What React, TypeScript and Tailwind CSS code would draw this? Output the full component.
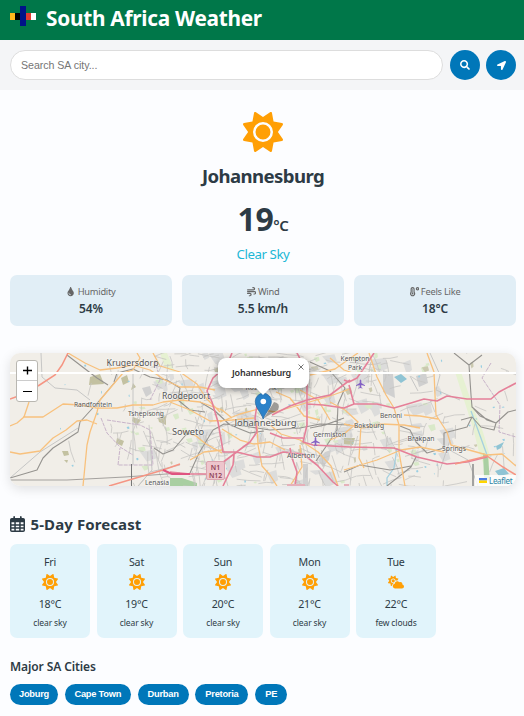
import React from "react";
import { FaSun, FaCloudSun, FaWind } from "react-icons/fa6";
import { FaSearch, FaLocationArrow, FaTint, FaTemperatureHigh } from "react-icons/fa";

const stats = [
  { icon: FaTint, label: "Humidity", value: "54%" },
  { icon: FaWind, label: "Wind", value: "5.5 km/h" },
  { icon: FaTemperatureHigh, label: "Feels Like", value: "18°C" },
];

const days = [
  { day: "Fri", temp: "18°C", text: "clear sky", icon: FaSun },
  { day: "Sat", temp: "19°C", text: "clear sky", icon: FaSun },
  { day: "Sun", temp: "20°C", text: "clear sky", icon: FaSun },
  { day: "Mon", temp: "21°C", text: "clear sky", icon: FaSun },
  { day: "Tue", temp: "22°C", text: "few clouds", icon: FaCloudSun },
];

const cities = [
  { name: "Joburg", width: "w-12" },
  { name: "Cape Town", width: "w-[66px]" },
  { name: "Durban", width: "w-[51px]" },
  { name: "Pretoria", width: "w-[53px]" },
  { name: "PE", width: "w-8" },
];

function seeded(seed: number) {
  let s = seed;
  return () => {
    s = (s * 16807) % 2147483647;
    return s / 2147483647;
  };
}

// Side streets: short bent segments, denser around the city centre.
function buildStreets() {
  const r = seeded(77);
  const out: string[] = [];
  while (out.length < 400) {
    const x = 10 + r() * 506;
    const y = 353 + r() * 133;
    const keep = x < 110 ? 0.06 : x < 150 ? 0.4 : x < 400 ? 1 : x < 445 ? 0.5 : 0.12;
    if (r() > keep) continue;
    const a = (r() < 0.5 ? 0 : Math.PI / 2) + (r() - 0.5) * 0.9;
    const l = 7 + r() * 17;
    const dx = Math.cos(a) * l;
    const dy = Math.sin(a) * l;
    out.push(`M${x.toFixed(1)} ${y.toFixed(1)}q${(dx / 2 + r() * 4 - 2).toFixed(1)} ${(dy / 2 + r() * 4 - 2).toFixed(1)} ${dx.toFixed(1)} ${dy.toFixed(1)}`);
  }
  return out.join("");
}

function buildPatches(seed: number, count: number, x0: number, x1: number, size: number) {
  const r = seeded(seed);
  let out = "";
  for (let i = 0; i < count; i++) {
    const x = x0 + r() * (x1 - x0);
    const y = 353 + r() * 130;
    const w = size * (0.4 + r());
    const h = size * (0.3 + r() * 0.8);
    out += `M${x.toFixed(1)} ${y.toFixed(1)}l${w.toFixed(1)} ${(-h * 0.3).toFixed(1)} ${(w * 0.2).toFixed(1)} ${h.toFixed(1)} ${(-w * 0.7).toFixed(1)} ${(h * 0.4).toFixed(1)}z`;
  }
  return out;
}

const streets = buildStreets();
const urban = buildPatches(21, 75, 140, 440, 11);
const parks = buildPatches(35, 70, 130, 430, 5);
const olive = buildPatches(90, 14, 170, 490, 5);
const ponds = buildPatches(12, 42, 60, 505, 2);

const orangeRoads =
  "M10 426L17 423L24 417L29 402M23 417H43L63 404L80 405L97 408H117L133 405H153L163 402L180 400L200 402L222 410L232 418" +
  "M10 452L20 454L40 451L53 438L66 430L77 421L87 420L97 424" +
  "M83 486L87 445L90 432L97 412L100 400L117 380L123 373L133 370L140 358L137 353" +
  "M68 353L85 363L100 370L117 368L133 365L150 370L165 380L180 387L200 387L215 390" +
  "M153 353L160 366L180 372L197 384L206 398L220 412M170 402L190 410L210 421L232 420L254 418" +
  "M220 422L240 414L258 409L275 412L306 403L330 396L350 389" +
  "M257 422L258 445L262 466L270 475L277 486M270 425L281 434L300 440L318 452L331 466L338 486" +
  "M310 375L335 369L352 357L358 353M330 402L345 410L358 422L344 434L330 440" +
  "M222 429L240 440L254 444L270 442L285 450M180 430L196 436L206 444L222 453M190 460L204 452L222 450" +
  "M369 353L377 377L386 395L394 408L399 425L399 452L405 486" +
  "M427 353L434 372L435 395L436 415L447 432L451 445L487 455L502 454L516 466" +
  "M404 415L420 416L438 419M361 425L359 458L364 468M344 470L377 460L401 450L420 447L444 452" +
  "M300 390L318 400L330 420M290 486L302 467L300 445M344 424L362 428L382 424L404 425L420 428" +
  "M330 358L344 370L356 374M276 392L290 398L304 416L320 420";

const pinkRoads =
  "M232 353L227 365L213 378L207 391L212 402L218 422L222 445L223 452L237 452L257 457L270 457L283 452L303 454L317 465L333 482L338 486" +
  "M170 472L190 474L207 474L222 463L234 454L250 442L257 432L255 418L257 405" +
  "M234 454L233 465L223 486M297 353L307 372V425L303 442L313 445L350 447L394 448L417 457L447 464L467 462L487 457" +
  "M350 380L330 395L307 400L290 406L272 415M270 433L283 438L303 438" +
  "M290 448L292 458L297 472L295 486M307 404L323 405L344 408L354 404H377L394 408L411 403L424 399L437 401L447 396L467 399H491L499 392L516 383" +
  "M374 353L364 368L357 378L349 382L344 380M349 385L354 404";

const rails =
  "M67 355L80 365L97 378L108 385M114 382L117 373L133 369L150 377L167 380L180 388L178 400L190 410L205 412" +
  "M115 382L100 400L80 422L78 432L53 448L43 458L37 470L10 478M190 473L199 453L213 430L224 424L244 426L270 430L300 428L320 424L350 425" +
  "M200 402L215 411L230 425L250 433L264 431M310 362L330 371L345 388L338 404L337 430L325 448L316 461" +
  "M344 418L325 425L310 428M454 353L469 365L471 395L472 407L487 420L496 423L494 430L481 427L472 417L461 420" +
  "M469 365L482 355M472 417L467 427L444 433V448L427 453L416 442L410 430L400 426M387 486L411 467L416 457" +
  "M472 407L480 416L496 423L508 412L516 410M154 448L163 454L173 450L190 430M344 472L360 465L390 470L411 466";

const labels: { x: number; y: number; s: number; t: string; w: number }[] = [
  { x: 132.5, y: 366, s: 9, t: "Krugersdorp", w: 52 },
  { x: 93, y: 407, s: 6.8, t: "Randfontein", w: 38 },
  { x: 146, y: 416, s: 6.8, t: "Tshepisong", w: 36 },
  { x: 186, y: 398.5, s: 9, t: "Roodepoort", w: 48 },
  { x: 188, y: 435, s: 9, t: "Soweto", w: 32 },
  { x: 157, y: 485, s: 6.8, t: "Lenasia", w: 24 },
  { x: 261, y: 390, s: 6.8, t: "Rosebank", w: 31 },
  { x: 265.5, y: 426, s: 9.5, t: "Johannesburg", w: 62 },
  { x: 329.5, y: 437, s: 6.8, t: "Germiston", w: 33 },
  { x: 301, y: 457.5, s: 6.8, t: "Alberton", w: 28 },
  { x: 355, y: 361, s: 6.8, t: "Kempton", w: 29 },
  { x: 355, y: 369.5, s: 6.8, t: "Park", w: 14 },
  { x: 391, y: 417.5, s: 6.8, t: "Benoni", w: 22 },
  { x: 369, y: 428, s: 6.8, t: "Boksburg", w: 30 },
  { x: 421, y: 440.5, s: 6.8, t: "Brakpan", w: 27 },
  { x: 454, y: 451, s: 6.8, t: "Springs", w: 24 },
];

function Plane({ x, y }: { x: number; y: number }) {
  return (
    <path
      transform={`translate(${x} ${y})`}
      d="M0-4.5Q.8-4.5.8-3V-1L4.5 1.2V2L.8 1V3.2L2 4V4.6L0 4.1L-2 4.6V4L-.8 3.2V1L-4.5 2V1.2L-.8-1V-3Q-.8-4.5 0-4.5Z"
      fill="#8461c4"
    />
  );
}

function CalendarIcon() {
  return (
    <svg className="h-4 w-[15px] shrink-0" viewBox="0 0 15 16" fill="currentColor">
      <path
        fillRule="evenodd"
        d="M4.200 0Q5 0 5 .9V2H10V.9Q10 0 10.800 0T11.700 .9V2H13.200Q15 2 15 3.800V14.200Q15 16 13.200 16H1.800Q0 16 0 14.200V3.800Q0 2 1.800 2H3.300V.9Q3.300 0 4.200 0ZM1.500 6.200V8.300H4.300V6.200ZM5.800 6.200V8.300H9.200V6.200ZM10.700 6.200V8.300H13.500V6.200ZM1.500 9.700V11.300H4.300V9.700ZM5.800 9.700V11.300H9.200V9.700ZM10.700 9.700V11.300H13.500V9.700ZM1.500 12.700V14.400H4.300V12.700ZM5.800 12.700V14.400H9.200V12.700ZM10.700 12.700V14.400H13.500V12.700Z"
      />
    </svg>
  );
}

function MapCanvas() {
  return (
    <svg viewBox="10 353 506 133" className="block h-[133px] w-[506px]" fill="none">
      <rect x="10" y="353" width="506" height="133" fill="#f1eee8" />
      <path d={urban} fill="#dcdcdb" />
      <path d={parks} fill="#d9e9c9" />
      <path d={olive} fill="#cbc9b0" />
      <path
        d="M90 377l10-3 4 10-15 1zM121 378l6-3 2 7-6 3zM133 383l3 4-5 3zM62 451h6l1 4-5 1zM64 460l4 0-1 3zM117 438l7 3-2 5-6-3zM133 417l8 3-4 5-5-4zM158 418l8-2v9l-7-3zM344 438h11l-2 7-9-1z"
        fill="#c3c1a1"
      />
      <path d="M160 353l5 15 10 4-8-19M455 372l6 0 14 40 8 20 7 24-3 18-8-22-6-24z" fill="#e6f1d2" />
      <path d="M483 453l5 2 2 28-6-6zM170 478l12 0 15 5v3h-27z" fill="#a9cfa2" />
      <path d="M142 388l8-2 2 7-6 4zM416 376l10-3 2 10-9 4zM383 370l10 4 2 24-12-6zM318 460l7-8 6-2-2 10-6 7zM303 464h5v22h-5z" fill="#d0d0d0" />
      <path d={ponds} fill="#9acfe2" />
      <path d="M394 377l7-3 6 5-6 4zM495 471l9-3 5 6-10 2zM497 450l-1-4 8-4-3 6z" fill="#8fc4d4" />
      <path d={streets} stroke="#c6c5c3" strokeWidth=".8" />
      <path
        d="M41 353L42 377L55 388L77 390L90 400M133 373V465M10 478L40 452L78 428M180 465L150 472L135 490M430 353L440 375L436 390L460 400M440 470L450 440M150 440L152 470L138 486M410 376L418 391M478 486L468 460L442 446"
        stroke="#c6c6c5"
        strokeWidth="1"
      />
      <path
        d="M101 418L107 433L120 447L133 455M118 465L120 448M107 420L140 425L150 430L153 465L118 465M491 363L482 378L500 405L499 432L516 437M155 360L160 380L150 400"
        stroke="#c3adc5"
        strokeWidth=".9"
        strokeDasharray="4 1"
      />
      <path d="M397 448L394 468L387 478V486M471 411L478 430L487 455" stroke="#a5d0df" strokeWidth="1.3" />
      <path d={rails} stroke="#95938f" strokeWidth="1.1" strokeLinejoin="round" />
      <path d="M10 480L67 480L125 477L180 473" stroke="#a4a19e" strokeWidth="1" />
      <path d="M131.500 464V486" stroke="#777" strokeWidth="1" />
      <path d="M473 464V486" stroke="#999" strokeWidth="1.8" />
      <path d={orangeRoads} stroke="#f8c17d" strokeWidth="1.3" strokeLinejoin="round" />
      <path d={pinkRoads} stroke="#e58099" strokeWidth="1.6" strokeLinejoin="round" />
      <path
        d="M10 399L24 394M38 386L55 375L62 365L68 353M109 486L163 470L180 464M455 464L487 456L503 467L516 475"
        stroke="#f59583"
        strokeWidth="1.5"
      />
      <path d="M163 470L172 474L190 474" stroke="#df5480" strokeWidth="2" />
      <path d="M10 373H516" stroke="#fff" strokeWidth="2" />
      <path d="M287 484h18v2h-18zM344 484h5v2h-5z" fill="#e6b0ba" />
      <rect x="206.500" y="461.500" width="18" height="18" rx="1.500" fill="#edc5cc" stroke="#dca3ae" />
      <g fontFamily="'Noto Sans', sans-serif" textAnchor="middle">
        <text x="215.500" y="469.800" fontSize="6.800" fontWeight="600" fill="#8f3e55">N1</text>
        <text x="215.500" y="477.800" fontSize="6.800" fontWeight="600" fill="#8f3e55">N12</text>
        {labels.map((l) => (
          <text
            key={l.t}
            x={l.x}
            y={l.y}
            fontSize={l.s}
            textLength={l.w}
            lengthAdjust="spacingAndGlyphs"
            fill="#555"
            stroke="#ffffff"
            strokeOpacity=".5"
            strokeWidth="1.2"
            paintOrder="stroke"
          >
            {l.t}
          </text>
        ))}
      </g>
      <Plane x={360.5} y={384} />
      <Plane x={315.5} y={441.5} />
      <path d="M264 418L274 402Q281 403 278 410Z" fill="#000" opacity=".35" />
      <path
        d="M263.200 419C261 412 255.300 408 255.300 401.300a8 8 0 0 1 16 0C271.300 408 265.500 412 263.200 419Z"
        fill="#2b82c9"
        stroke="#2c6ca5"
        strokeWidth=".8"
      />
      <circle cx="263.300" cy="401.500" r="2.800" fill="#fff" />
    </svg>
  );
}

function MapPanel() {
  return (
    <div className="relative mt-[27px] h-[133px] w-[506px] overflow-hidden rounded-[10px] shadow-[0_3px_12px_rgba(0,0,0,0.12)]">
      <MapCanvas />
      <div className="absolute top-[7px] left-[6px] flex h-[42px] w-[22px] flex-col rounded-[3px] border border-[#b9b7b1] bg-white">
        <button className="flex h-5 items-center justify-center border-b border-[#ccc]">
          <svg className="h-[9px] w-[9px]" viewBox="0 0 9 9"><path d="M4.500 .5V8.500M0 4.500H9" stroke="#000" strokeWidth="1.400" /></svg>
        </button>
        <button className="flex h-5 items-center justify-center">
          <svg className="h-[9px] w-[9px]" viewBox="0 0 9 9"><path d="M0 4.500H9" stroke="#000" strokeWidth="1.200" /></svg>
        </button>
      </div>
      <div className="absolute top-[5px] left-[208px] flex h-[30px] w-[91px] items-center justify-center rounded-[8px] bg-white pr-[4px] text-[9px] font-semibold tracking-[-0.2px] text-[#333] shadow-[0_2px_7px_rgba(0,0,0,0.4)]">
        Johannesburg
        <svg className="absolute top-[6px] right-[5px] h-[6px] w-[6px]" viewBox="0 0 6 6"><path d="M.5.5L5.500 5.500M5.500.5L.5 5.500" stroke="#757575" /></svg>
        <svg className="absolute top-[29px] left-[37px] h-[8px] w-[16px]" viewBox="0 0 16 8"><path d="M0 0H16L8 8Z" fill="#fff" /></svg>
      </div>
      <div className="absolute right-0 bottom-0 flex h-[11px] w-[41px] items-center gap-[2px] bg-white/80 pl-1 text-[8px] text-[#2a87a8]">
        <svg className="h-[5px] w-2 shrink-0" viewBox="0 0 8 5"><path d="M0 0H8V2.500H0Z" fill="#4c7be1" /><path d="M0 2.500H8V5H0Z" fill="#ffd500" /></svg>
        <span className="tracking-[-0.3px]">Leaflet</span>
      </div>
    </div>
  );
}

export default function App() {
  return (
    <div className="h-[716px] w-[524px] overflow-hidden bg-[#fcfdff] font-['Noto_Sans',sans-serif] text-[#2d3b45]">
      <header className="flex h-10 items-start bg-[#007749] pl-[10px]">
        <svg className="mt-[6px] h-5 w-[26px]" viewBox="0 0 26 20" shapeRendering="crispEdges">
          <path d="M0 7H5V14H0Z" fill="#ffb81c" />
          <path d="M5 7H10V14H5Z" fill="#000" />
          <path d="M16 7H21V14H16Z" fill="#e03c31" />
          <path d="M21 7H26V14H21Z" fill="#fff" />
          <path d="M10 0H16V20H10Z" fill="#001489" />
        </svg>
        <h1 className="ml-[10px] pt-[4px] text-[20.8px] leading-[28px] font-bold tracking-[-0.27px] whitespace-nowrap text-white">South Africa Weather</h1>
      </header>

      <div className="flex h-[50px] items-center bg-[#f4f5f7] pl-[10px]">
        <input
          className="h-[30px] w-[433px] rounded-full border border-[#ddd] bg-white px-[10px] font-['Liberation_Sans',sans-serif] text-[10.67px] tracking-[-0.06px] outline-none placeholder:text-[#757575]"
          placeholder="Search SA city..."
        />
        <button className="ml-[7px] flex size-[30px] items-center justify-center rounded-full bg-[#0077b9] text-white">
          <FaSearch size={10} />
        </button>
        <button className="ml-[6px] flex size-[30px] items-center justify-center rounded-full bg-[#0077b9] text-white">
          <FaLocationArrow size={9} />
        </button>
      </div>

      <main className="flex flex-col px-[10px]">
        <section className="flex w-[506px] flex-col items-center">
          <FaSun className="mt-[22px] text-[#ff9f05]" size={40} />
          <h2 className="mt-[10px] text-[18.6px] leading-7 font-bold tracking-[-0.6px]">Johannesburg</h2>
          <div className="mt-[8px] flex h-[42px] items-baseline text-[32px] leading-[42px] font-bold tracking-[-0.4px]">
            19<span className="text-[15px] font-semibold">°C</span>
          </div>
          <p className="mt-[4px] text-[13.3px] leading-5 tracking-[-0.45px] text-[#1cb8d6]">Clear Sky</p>
        </section>

        <section className="mt-[11px] grid w-[506px] grid-cols-3 gap-[10px]">
          {stats.map(({ icon: Icon, label, value }) => (
            <div key={label} className="flex h-[51px] flex-col items-center rounded-[7px] bg-[#e1eef6] pt-[10px]">
              <div className="flex h-[14px] items-center gap-[2px] text-[9.3px] tracking-[-0.25px] text-[#666]">
                <Icon size={9.3} />
                <span>{label}</span>
              </div>
              <div className="mt-[2px] text-[12px] leading-4 font-semibold tracking-[-0.1px]">{value}</div>
            </div>
          ))}
        </section>

        <MapPanel />

        <h3 className="mt-[26px] flex h-6 items-center gap-[5.500px] text-[15px] font-bold">
          <CalendarIcon />
          <span className="tracking-[0.1px]">5-Day Forecast</span>
        </h3>
        <section className="mt-2 grid w-[426px] grid-cols-5 gap-[6.500px]">
          {days.map(({ day, temp, text, icon: Icon }) => (
            <div key={day} className="flex h-[94px] flex-col items-center rounded-[7px] bg-[#e1f4fb] pt-[10px]">
              <div className="h-4 text-[10.67px] leading-4 tracking-[-0.2px]">{day}</div>
              <Icon className="mt-1 h-4 w-auto text-[#ff9f05]" />
              <div className="mt-[6px] h-4 text-[10.67px] leading-4 tracking-[-0.25px]">{temp}</div>
              <div className="mt-1 text-[8.5px] leading-[14px] tracking-[-0.12px]">{text}</div>
            </div>
          ))}
        </section>

        <h4 className="mt-[20px] text-[12px] leading-[18px] font-semibold tracking-[-0.1px]">Major SA Cities</h4>
        <div className="mt-[8px] flex gap-[6.800px]">
          {cities.map((c) => (
            <button
              key={c.name}
              className={`${c.width} h-[21px] rounded-full bg-[#0077b9] font-['Liberation_Sans',sans-serif] text-[9.3px] font-bold tracking-[-0.25px] whitespace-nowrap text-white`}
            >
              {c.name}
            </button>
          ))}
        </div>
      </main>
    </div>
  );
}
